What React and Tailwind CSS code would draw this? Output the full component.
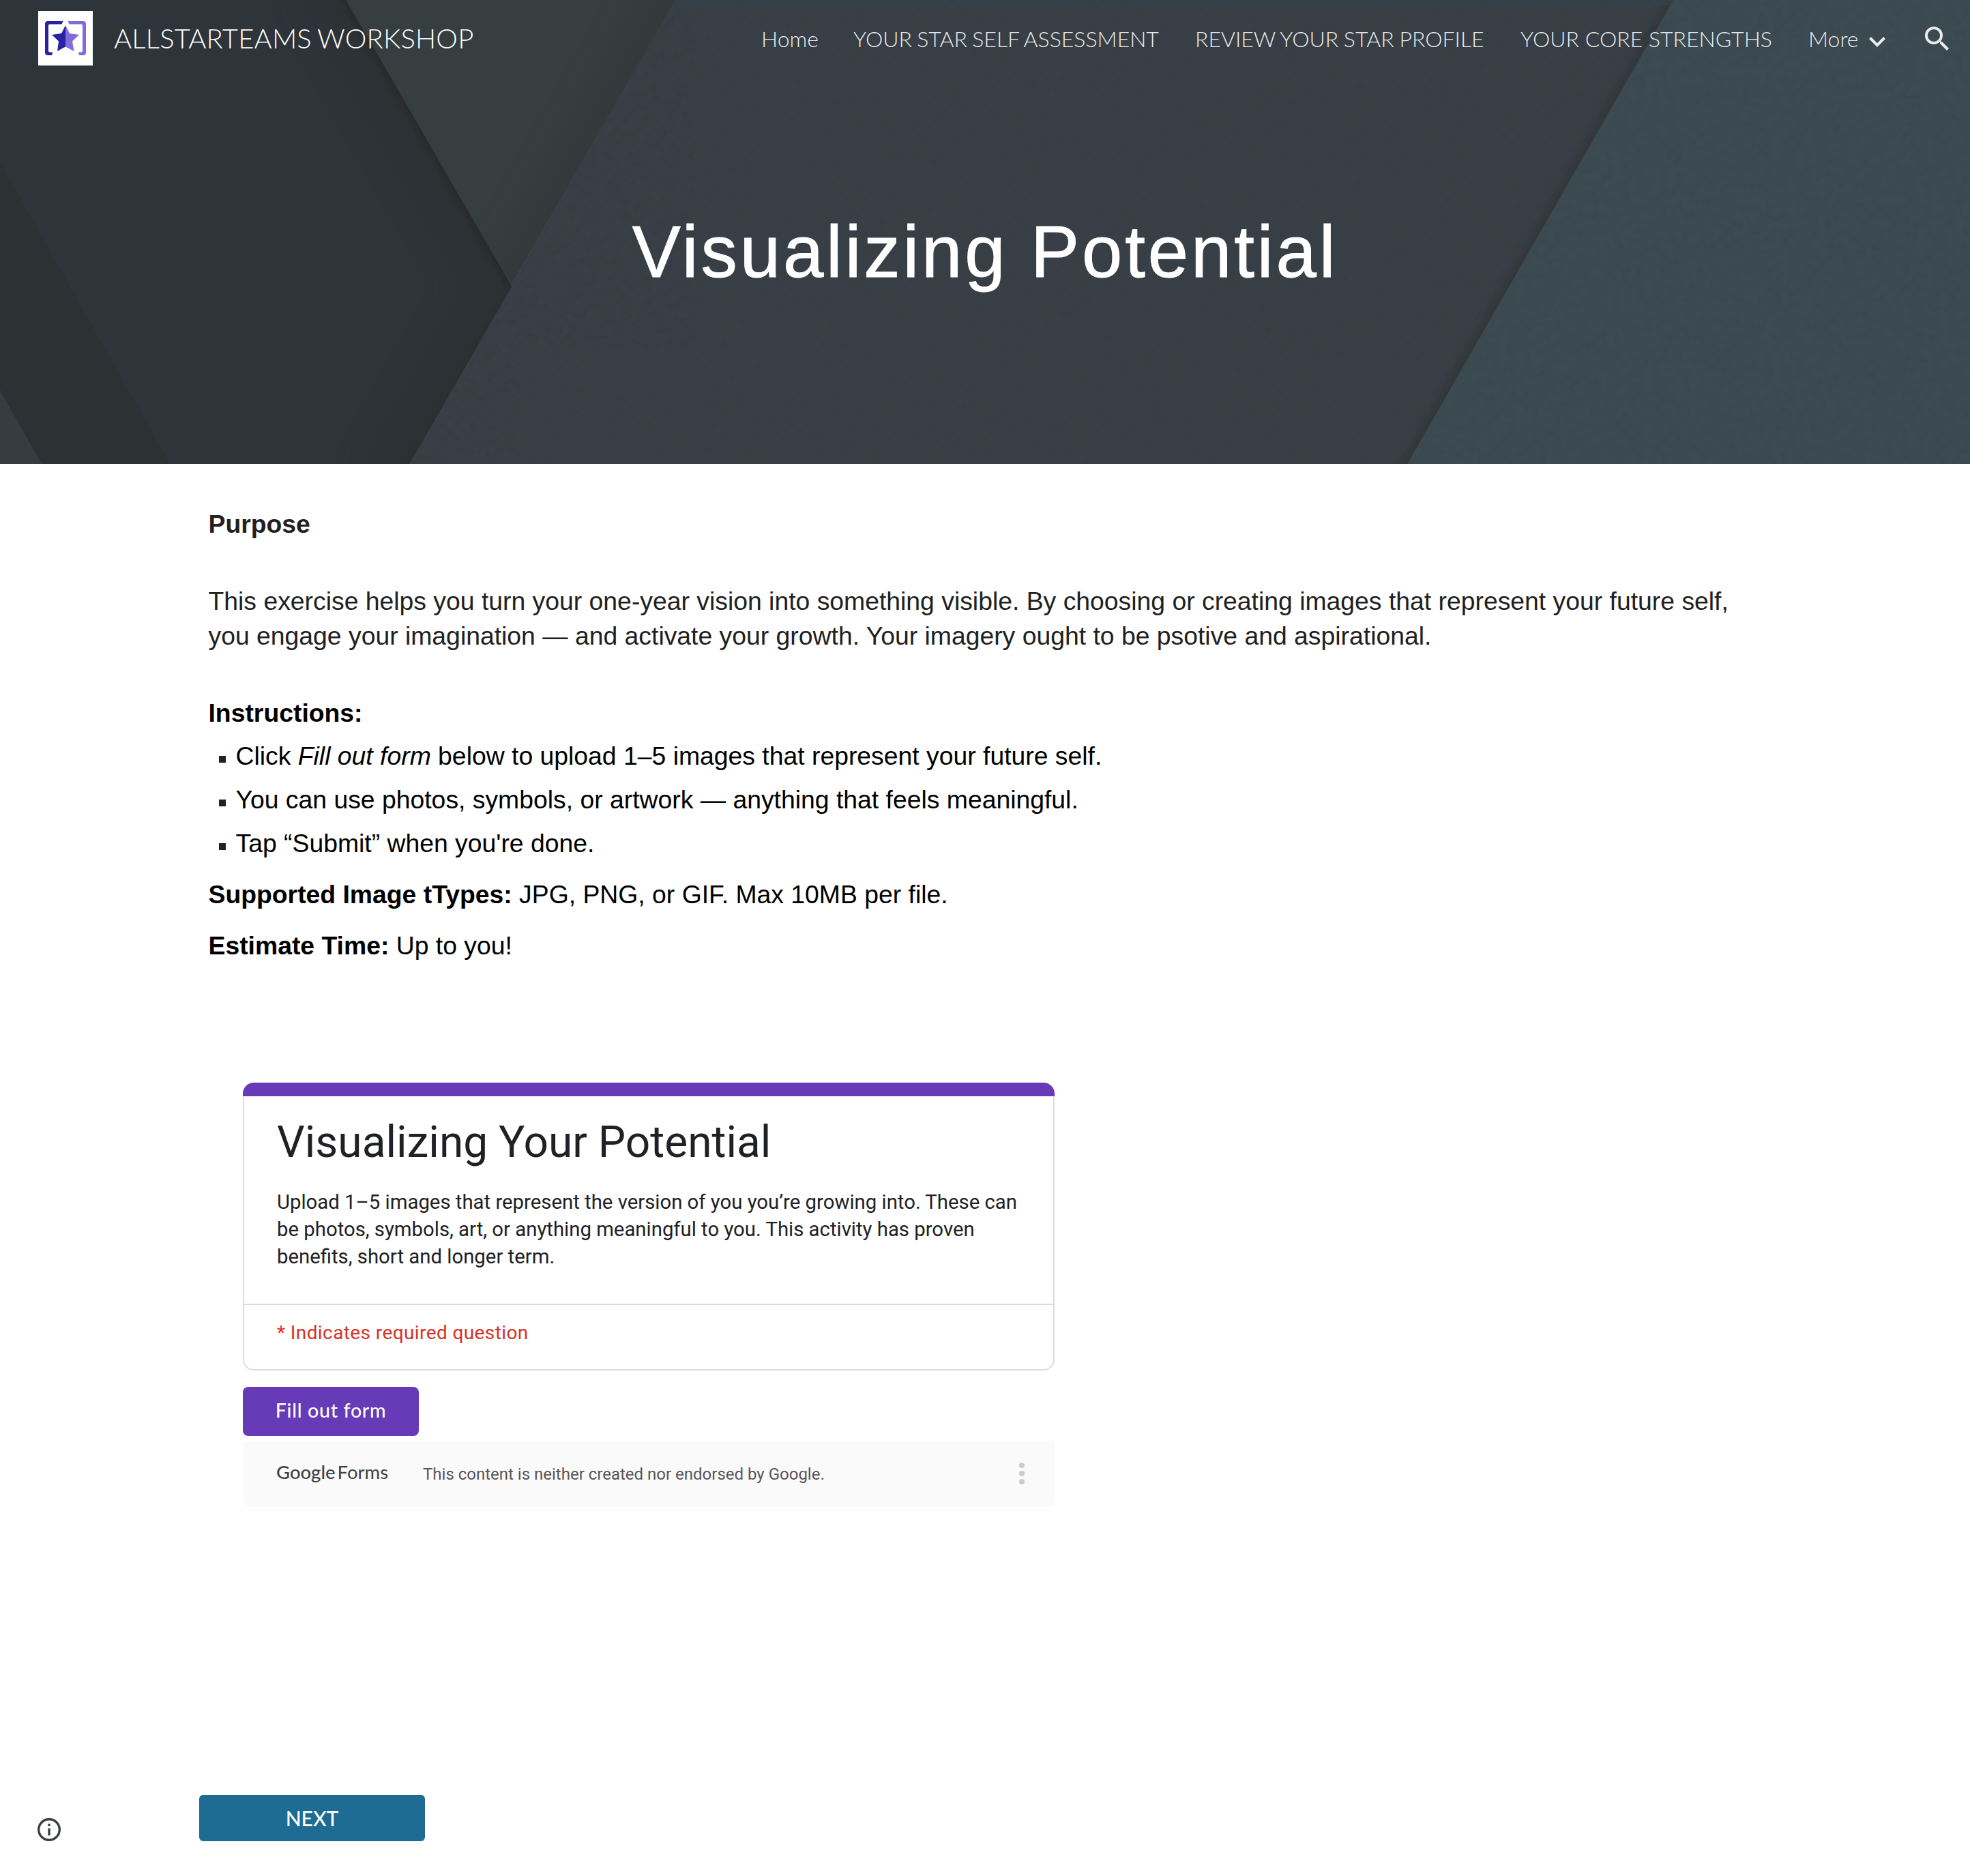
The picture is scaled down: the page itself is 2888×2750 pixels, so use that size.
const navItems = [
  { label: "Home", cls: "w-[135px]" },
  { label: "YOUR STAR SELF ASSESSMENT", cls: "w-[501px] [word-spacing:-1.5px]" },
  { label: "REVIEW YOUR STAR PROFILE", cls: "w-[477px] [word-spacing:-1px]" },
  { label: "YOUR CORE STRENGTHS", cls: "w-[422px]" },
];

function Logo() {
  return (
    <svg className="size-20 shrink-0 bg-white" viewBox="0 0 80 80">
      <path d="M36.500 15H14a4 4 0 0 0-4 4v42a4 4 0 0 0 4 4h6l1.200-4.600H17a2 2 0 0 1-2-2V21.600a2 2 0 0 1 2-2h17.500z" fill="#2b22a3" />
      <path d="M43.500 15H66a4 4 0 0 1 4 4v42a4 4 0 0 1-4 4h-6l-1.200-4.600H63a2 2 0 0 0 2-2V21.600a2 2 0 0 0-2-2H45.500z" fill="#7f6ddb" />
      <path d="M40 21v31.500L28 59l2-14.500L20 35l14-2z" fill="#2b22a3" />
      <path d="M40 21v31.500L52.500 59 50 44.500 60 35l-14-2z" fill="#7f6ddb" />
    </svg>
  );
}

function HeroArt() {
  return (
    <svg className="absolute inset-0 h-full w-full" viewBox="0 0 2888 680" preserveAspectRatio="none">
      <defs>
        <filter id="soft" x="-40%" y="-20%" width="180%" height="140%" colorInterpolationFilters="sRGB"><feGaussianBlur stdDeviation="26" /></filter>
        <filter id="tight" x="-20%" y="-20%" width="140%" height="140%" colorInterpolationFilters="sRGB"><feGaussianBlur stdDeviation="5" /></filter>
        <filter id="grain" x="0" y="0" width="100%" height="100%" colorInterpolationFilters="sRGB">
          <feTurbulence type="fractalNoise" baseFrequency="0.09" numOctaves="3" seed="4" />
          <feColorMatrix values="0 0 0 0 0.15  0 0 0 0 0.18  0 0 0 0 0.18  1.6 0 0 0 -0.7" />
        </filter>
        <clipPath id="leftClip"><path d="M0 0H507L750 420L600 680H0z" /></clipPath>
        <clipPath id="triClip"><path d="M507 0H990L748 420z" /></clipPath>
        <clipPath id="midClip"><path d="M990 0H2453L2063 680H600z" /></clipPath>
        <clipPath id="paperClip"><path d="M990 0H2888V680H600z" /></clipPath>
      </defs>
      <rect width="2888" height="680" fill="#3c4a52" />
      <path d="M990 0H2453L2063 680H600z" fill="#383f46" />
      <g clipPath="url(#midClip)">
        <path d="M2465 -20L2051 700" stroke="#2c302c" strokeOpacity="0.45" strokeWidth="18" filter="url(#tight)" />
        <rect width="2888" height="7" fill="#35434b" fillOpacity="0.7" />
      </g>
      <g clipPath="url(#paperClip)">
        <rect width="2888" height="680" filter="url(#grain)" opacity="0.12" />
      </g>
      <path d="M507 0H990L748 420z" fill="#363e40" />
      <g clipPath="url(#triClip)">
        <path d="M1013 -40L725 460" stroke="#2f3232" strokeOpacity="0.4" strokeWidth="60" filter="url(#soft)" />
      </g>
      <path d="M0 0H507L750 420L600 680H0z" fill="#2d343a" />
      <g clipPath="url(#leftClip)">
        <path d="M484 -40L750 420L577 720" fill="none" stroke="#2d3232" strokeOpacity="0.8" strokeWidth="80" filter="url(#soft)" />
        <path d="M484 -40L750 420" fill="none" stroke="#222526" strokeOpacity="0.55" strokeWidth="14" filter="url(#tight)" />
        <path d="M750 420L577 720" fill="none" stroke="#262a2a" strokeOpacity="0.3" strokeWidth="14" filter="url(#tight)" />
      </g>
      <path d="M0 238L249 680H0z" fill="#2b3234" />
      <path d="M0 572L61 680H0z" fill="#363d41" />
    </svg>
  );
}

function Header() {
  return (
    <header className="relative flex h-28 items-center font-['Lato'] font-light text-white">
      <div className="flex items-center pl-14">
        <Logo />
        <div className="ml-[31px] text-[40px] leading-[48px] tracking-[0.15px] whitespace-nowrap [word-spacing:-2px]">ALLSTARTEAMS WORKSHOP</div>
      </div>
      <nav className="ml-auto flex items-center text-[32px] leading-10 whitespace-nowrap text-[#e9ebec]">
        {navItems.map((n) => (
          <a key={n.label} className={`${n.cls} pt-0.5`}>{n.label}</a>
        ))}
        <a className="flex w-[171px] items-center pt-0.5">
          More
          <svg className="mt-[9px] ml-[15px] h-[15px] w-6" viewBox="6 8.590 12 7.410" fill="#e9ebec"><path d="M16.590 8.590 12 13.170 7.410 8.590 6 10l6 6 6-6z" /></svg>
        </a>
        <svg className="mr-[31px] size-[35px]" viewBox="3 3 17.490 17.490" fill="#e9ebec">
          <path d="M15.500 14h-.79l-.28-.27A6.471 6.471 0 0 0 16 9.500 6.500 6.500 0 1 0 9.500 16c1.610 0 3.090-.59 4.230-1.570l.27.28v.79l5 4.990L20.490 19l-4.990-5zm-6 0C7.010 14 5 11.990 5 9.500S7.010 5 9.500 5 14 7.010 14 9.500 11.990 14 9.500 14z" />
        </svg>
      </nav>
    </header>
  );
}

function FormCard() {
  return (
    <section className="ml-[356px] w-[1190px] font-['Roboto']">
      <div className="h-5 rounded-t-2xl bg-[#673ab7]" />
      <div className="h-[402px] rounded-b-2xl border-2 border-t-0 border-[#dadce0] text-[#202124]">
        <div className="h-[306px] border-b-2 border-[#dadce0] px-12 pt-7">
          <h2 className="text-[64px] leading-[80px] whitespace-nowrap">Visualizing Your Potential</h2>
          <p className="mt-[27px] text-[29.33px] leading-10 whitespace-nowrap">
            Upload 1–5 images that represent the version of you you’re growing into. These can
            <br />be photos, symbols, art, or anything meaningful to you. This activity has proven
            <br />benefits, short and longer term.
          </p>
        </div>
        <p className="px-12 pt-[21px] text-[28px] leading-10 tracking-[0.4px] text-[#d93025]">* Indicates required question</p>
      </div>
      <button className="mt-6 block h-[72px] w-[258px] rounded-lg bg-[#673ab7] pb-1 font-['Lato'] text-[28.5px] font-medium tracking-[0.7px] text-white">
        Fill out form
      </button>
      <footer className="mt-2 flex h-24 items-center rounded-b-xl bg-[#fafafa] pl-[49px]">
        <div className="w-[215px] pb-1.5 font-['Lato'] text-[27.5px] whitespace-nowrap text-[#424242]">
          <span className="font-medium">Google</span>
          <span className="ml-[3px]">Forms</span>
        </div>
        <div className="text-[24px] whitespace-nowrap text-[#565656]">This content is neither created nor endorsed by Google.</div>
        <svg className="mr-[42px] mb-0.5 ml-auto h-9 w-3" viewBox="0 0 12 36" fill="#cbcccd">
          <circle cx="6" cy="6" r="4" /><circle cx="6" cy="18" r="4" /><circle cx="6" cy="30" r="4" />
        </svg>
      </footer>
    </section>
  );
}

export default function App() {
  return (
    <div className="h-[2750px] w-[2888px] overflow-hidden bg-white">
      <div className="relative h-[680px]">
        <HeroArt />
        <Header />
        <h1 className="relative mt-[193px] text-center font-['Liberation_Sans'] text-[106.67px] leading-[128px] tracking-[3.9px] whitespace-nowrap text-white [-webkit-text-stroke:1px_white]">
          Visualizing Potential
        </h1>
      </div>
      <main>
        <article className="pl-[305.5px] font-['Liberation_Sans'] text-[37.33px] leading-[51px] whitespace-nowrap text-black">
          <p className="pt-[63px] font-bold text-[#212121]">Purpose</p>
          <p className="mt-[62px] text-[#212121]">
            This exercise helps you turn your one-year vision into something visible. By choosing or creating images that represent your future self,
            <br />you engage your imagination — and activate your growth. Your imagery ought to be psotive and aspirational.
          </p>
          <p className="mt-[62px] font-bold">Instructions:</p>
          <ul className="mt-3 flex flex-col gap-[13px]">
            <li className="flex items-center"><span className="mt-[8px] mr-[15px] ml-[15px] size-[10px] bg-[#212121]" /><span>Click <em>Fill out form</em> below to upload 1–5 images that represent your future self.</span></li>
            <li className="flex items-center"><span className="mt-[8px] mr-[15px] ml-[15px] size-[10px] bg-[#212121]" /><span>You can use photos, symbols, or artwork — anything that feels meaningful.</span></li>
            <li className="flex items-center"><span className="mt-[8px] mr-[15px] ml-[15px] size-[10px] bg-[#212121]" /><span>Tap “Submit” when you're done.</span></li>
          </ul>
          <p className="mt-6"><b>Supported Image tTypes:</b> JPG, PNG, or GIF. Max 10MB per file.</p>
          <p className="mt-6"><b>Estimate Time:</b> Up to you!</p>
        </article>
        <div className="h-[175px]" />
        <FormCard />
      </main>
      <div className="mt-[422px] flex items-start pl-[55px]">
        <svg className="mt-[34px] size-[34px]" viewBox="0 0 34 34">
          <circle cx="17" cy="17" r="15.300" fill="none" stroke="#3c4043" strokeWidth="3.400" />
          <path d="M15.300 15.300h3.400v10.200h-3.400zM15.300 8.500h3.400v3.400h-3.400z" fill="#3c4043" />
        </svg>
        <button className="ml-[203px] h-[68px] w-[331px] rounded-md bg-[#1e6c93] font-['Lato'] text-[30px] font-medium text-white">NEXT</button>
      </div>
    </div>
  );
}
